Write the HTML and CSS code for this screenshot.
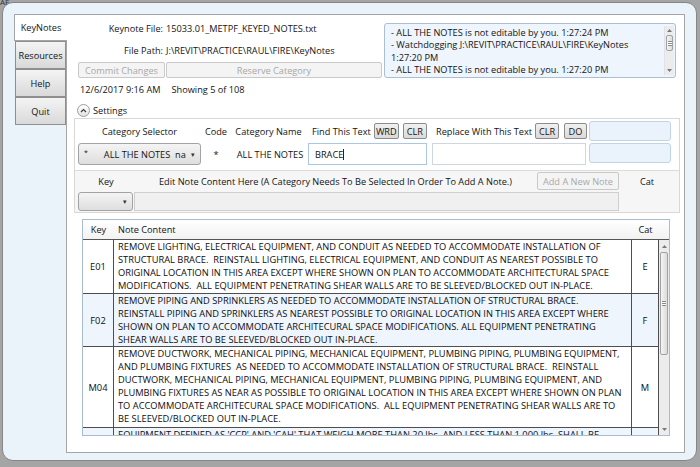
FILE: index.html
```html
<!DOCTYPE html>
<html>
<head>
<meta charset="utf-8">
<title>KeyNotes</title>
<link rel="stylesheet" href="styles.css">
</head>
<body>
<div class="desk-label">AF</div>
<div class="window">
  <div class="tabs">
    <div class="tab active">KeyNotes</div>
    <div class="tab">Resources</div>
    <div class="tab">Help</div>
    <div class="tab">Quit</div>
  </div>
  <div class="panel">
    <div class="head">
      <div class="head-left">
        <div class="info">
          <span class="lbl">Keynote File:</span><span class="val">15033.01_METPF_KEYED_NOTES.txt</span>
          <span class="lbl">File Path:</span><span class="val">J:\REVIT\PRACTICE\RAUL\FIRE\KeyNotes</span>
        </div>
        <div class="btnrow">
          <div class="btn disabled commit">Commit Changes</div>
          <div class="btn disabled reserve">Reserve Category</div>
        </div>
        <div class="status"><span>12/6/2017 9:16 AM</span><span class="showing">Showing 5 of 108</span></div>
      </div>
      <div class="log">
        <div class="log-text">
          <div>- ALL THE NOTES is not editable by you. 1:27:24 PM</div>
          <div>- Watchdogging J:\REVIT\PRACTICE\RAUL\FIRE\KeyNotes</div>
          <div>1:27:20 PM</div>
          <div>- ALL THE NOTES is not editable by you. 1:27:20 PM</div>
        </div>
        <div class="vscroll log-scroll">
          <div class="arrow"><svg width="5" height="3" viewBox="0 0 5 3"><path d="M0 3 L2.5 0 L5 3 Z" fill="#7a7a7a"/></svg></div>
          <div class="track"><div class="thumb log-thumb"><span class="grip"></span></div></div>
          <div class="arrow"><svg width="5" height="3" viewBox="0 0 5 3"><path d="M0 0 L2.5 3 L5 0 Z" fill="#7a7a7a"/></svg></div>
        </div>
      </div>
    </div>

    <div class="exp-row">
      <div class="exp-btn"><svg width="7" height="5" viewBox="0 0 7 5"><path d="M1 4 L3.5 1.5 L6 4" fill="none" stroke="#3c3c3c" stroke-width="1.2"/></svg></div>
      <span class="exp-label">Settings</span>
    </div>

    <div class="group">
      <div class="group-top">
        <div class="cell center">Category Selector</div>
        <div class="cell center">Code</div>
        <div class="cell center">Category Name</div>
        <div class="cell find"><span>Find This Text</span><span class="sbtn wrd">WRD</span><span class="sbtn clr">CLR</span></div>
        <div class="cell repl"><span>Replace With This Text</span><span class="sbtn clr2">CLR</span><span class="sbtn do">DO</span></div>
        <div class="cell"><div class="bluebox top"></div></div>

        <div class="cell"><div class="combo cat-combo"><span class="star">*</span><span class="combo-text">ALL THE NOTES&nbsp; na</span><span class="caret">&#9662;</span></div></div>
        <div class="cell center">*</div>
        <div class="cell center name">ALL THE NOTES</div>
        <div class="cell"><div class="textbox find-box">BRACE<span class="cursor"></span></div></div>
        <div class="cell"><div class="textbox repl-box"></div></div>
        <div class="cell"><div class="bluebox bottom"></div></div>
      </div>
      <div class="group-bottom">
        <div class="cell center">Key</div>
        <div class="cell center">Edit Note Content Here (A Category Needs To Be Selected In Order To Add A Note.)</div>
        <div class="cell"><div class="btn disabled add">Add A New Note</div></div>
        <div class="cell center">Cat</div>

        <div class="cell"><div class="combo key-combo"><span class="caret">&#9662;</span></div></div>
        <div class="cell span2"><div class="notebox"></div></div>
        <div class="cell"></div>
      </div>
    </div>

    <div class="grid">
      <div class="grid-head">
        <div class="hc key">Key</div>
        <div class="hc note">Note Content</div>
        <div class="hc cat">Cat</div>
        <div class="hc sc"></div>
      </div>
      <div class="grid-body">
        <div class="rows">
          <div class="row">
            <div class="c key">E01</div>
            <div class="c note">REMOVE LIGHTING, ELECTRICAL EQUIPMENT, AND CONDUIT AS NEEDED TO ACCOMMODATE INSTALLATION OF
STRUCTURAL BRACE.  REINSTALL LIGHTING, ELECTRICAL EQUIPMENT, AND CONDUIT AS NEAREST POSSIBLE TO
ORIGINAL LOCATION IN THIS AREA EXCEPT WHERE SHOWN ON PLAN TO ACCOMMODATE ARCHITECTURAL SPACE
MODIFICATIONS.  ALL EQUIPMENT PENETRATING SHEAR WALLS ARE TO BE SLEEVED/BLOCKED OUT IN-PLACE.</div>
            <div class="c cat">E</div>
          </div>
          <div class="row alt short">
            <div class="c key">F02</div>
            <div class="c note">REMOVE PIPING AND SPRINKLERS AS NEEDED TO ACCOMMODATE INSTALLATION OF STRUCTURAL BRACE.
REINSTALL PIPING AND SPRINKLERS AS NEAREST POSSIBLE TO ORIGINAL LOCATION IN THIS AREA EXCEPT WHERE
SHOWN ON PLAN TO ACCOMMODATE ARCHITECURAL SPACE MODIFICATIONS. ALL EQUIPMENT PENETRATING
SHEAR WALLS ARE TO BE SLEEVED/BLOCKED OUT IN-PLACE.</div>
            <div class="c cat">F</div>
          </div>
          <div class="row tall">
            <div class="c key">M04</div>
            <div class="c note">REMOVE DUCTWORK, MECHANICAL PIPING, MECHANICAL EQUIPMENT, PLUMBING PIPING, PLUMBING EQUIPMENT,
AND PLUMBING FIXTURES  AS NEEDED TO ACCOMMODATE INSTALLATION OF STRUCTURAL BRACE.  REINSTALL
DUCTWORK, MECHANICAL PIPING, MECHANICAL EQUIPMENT, PLUMBING PIPING, PLUMBING EQUIPMENT, AND
PLUMBING FIXTURES AS NEAR AS POSSIBLE TO ORIGINAL LOCATION IN THIS AREA EXCEPT WHERE SHOWN ON PLAN
TO ACCOMMODATE ARCHITECURAL SPACE MODIFICATIONS.  ALL EQUIPMENT PENETRATING SHEAR WALLS ARE TO
BE SLEEVED/BLOCKED OUT IN-PLACE.</div>
            <div class="c cat">M</div>
          </div>
          <div class="row alt">
            <div class="c key">M05</div>
            <div class="c note">EQUIPMENT DEFINED AS 'CCP' AND 'CAH' THAT WEIGH MORE THAN 20 lbs. AND LESS THAN 1,000 lbs. SHALL BE
SECURED TO THE STRUCTURE.</div>
            <div class="c cat">M</div>
          </div>
        </div>
        <div class="vscroll grid-scroll">
          <div class="arrow"><svg width="5" height="3" viewBox="0 0 5 3"><path d="M0 3 L2.5 0 L5 3 Z" fill="#7a7a7a"/></svg></div>
          <div class="track"><div class="thumb grid-thumb"><span class="grip"></span></div></div>
          <div class="arrow"><svg width="5" height="3" viewBox="0 0 5 3"><path d="M0 0 L2.5 3 L5 0 Z" fill="#7a7a7a"/></svg></div>
        </div>
      </div>
    </div>
  </div>
</div>
</body>
</html>
```
FILE: styles.css
```css
* { box-sizing: border-box; }
html, body { margin: 0; padding: 0; }
body {
  width: 700px;
  height: 467px;
  overflow: hidden;
  background: #a5a5a5;
  font-family: "Open Sans", "Noto Sans", sans-serif;
  font-size: 9.2px;
  color: #141414;
  position: relative;
}
.desk-label {
  position: absolute;
  left: 0;
  top: -4px;
  font-size: 8px;
  color: #333;
  z-index: 3;
}
.window {
  margin: 2px 0 0 2px;
  width: 695px;
  height: 459px;
  border: 1px solid #868686;
  border-radius: 11px;
  background: #eaf2fa;
  padding: 11px 11px 0 11px;
  display: flex;
  align-items: flex-start;
}

/* tabs */
.tabs {
  width: 53px;
  margin-right: -1px;
  display: flex;
  flex-direction: column;
  position: relative;
  z-index: 1;
}
.tab {
  height: 28px;
  width: 51px;
  margin-left: 1px;
  border: 1px solid #8f8f8f;
  background: linear-gradient(#f4f4f4, #d9d9d9);
  display: flex;
  align-items: center;
  justify-content: center;
  color: #141414;
}
.tab.active {
  height: 27px;
  width: 53px;
  margin-left: 0;
  background: #fff;
  border: 1px solid #a5a5a5;
  border-right: none;
}

/* main panel */
.panel {
  width: 619px;
  height: 439px;
  border: 1px solid #a5a5a5;
  background: #fff;
  padding: 0 4px 0 7px;
}
.head { display: flex; height: 85px; }
.head-left { width: 304px; margin-left: 4px; padding-top: 2px; }
.info {
  display: grid;
  grid-template-columns: 85px auto;
  column-gap: 3px;
  grid-auto-rows: 22px;
  align-items: center;
}
.lbl { text-align: right; }
.btnrow { display: flex; margin-top: 1px; height: 16px; }
.btn {
  display: flex;
  align-items: center;
  justify-content: center;
  border-radius: 2px;
}
.btn.disabled {
  background: #f4f4f4;
  border: 1px solid #c9c9c9;
  color: #a8a8a8;
}
.commit { width: 87px; }
.reserve { width: 216px; margin-left: 1px; }
.status { height: 22px; display: flex; align-items: center; padding-left: 2px; }
.showing { margin-left: 11px; }

.log {
  width: 292px;
  height: 55px;
  margin: 8px 0 0 2px;
  border: 1px solid #a9bfd5;
  border-radius: 3px;
  background: #eef5fc;
  display: flex;
  padding: 2px 1px 2px 0;
}
.log-text { flex: 1; padding: 1px 0 0 6px; line-height: 12.3px; }

/* scrollbars */
.vscroll { display: flex; flex-direction: column; width: 10px; background: #ececec; }
.vscroll .arrow { height: 9px; display: flex; align-items: center; justify-content: center; }
.vscroll .track { flex: 1; position: relative; }
.thumb {
  margin: 0 1px;
  border: 1px solid #a2a2a2;
  border-radius: 2px;
  background: linear-gradient(90deg, #f4f4f4, #dcdcdc);
  display: flex;
  align-items: center;
  justify-content: center;
}
.grip {
  width: 4px;
  height: 5px;
  border-top: 1px solid #8a8a8a;
  border-bottom: 1px solid #8a8a8a;
  background: linear-gradient(#fff 0 1px, #8a8a8a 1px 2px, #fff 2px);
}
.log-thumb { height: 16px; }
.log-scroll { border-left: 1px solid #dfe3e8; }

/* expander */
.exp-row { height: 18px; display: flex; align-items: center; padding-top: 2px; padding-left: 3px; }
.exp-btn {
  width: 13px;
  height: 13px;
  border-radius: 50%;
  border: 1px solid #9d9d9d;
  background: linear-gradient(#ffffff, #e3e3e3);
  display: flex;
  align-items: center;
  justify-content: center;
}
.exp-label { margin-left: 3px; }

/* settings group */
.group { border: 1px solid #d8d8d8; }
.group-top {
  display: grid;
  grid-template-columns: 123px 30px 75px 123px 159px 83px;
  grid-template-rows: 20px 22px;
  row-gap: 2px;
  padding: 2px 0 5px 3px;
  align-items: center;
}
.cell { display: flex; align-items: center; height: 100%; white-space: nowrap; }
.cell.center { justify-content: center; }
.find { padding-left: 6px; }
.repl { padding-left: 7px; }
.sbtn {
  height: 16px;
  display: inline-flex;
  align-items: center;
  justify-content: center;
  border: 1px solid #8c8c8c;
  border-radius: 2px;
  background: linear-gradient(#f1f1f1, #d9d9d9);
  color: #141414;
}
.wrd { width: 25px; margin-left: 3px; }
.clr { width: 24px; margin-left: 4px; }
.clr2 { width: 24px; margin-left: 3px; }
.do { width: 23px; margin-left: 5px; }
.bluebox {
  width: 82px;
  margin-left: 1px;
  height: 20px;
  border: 1px solid #c2d3e4;
  border-radius: 3px;
  background: #eaf3fc;
}
.bluebox.bottom { align-self: flex-start; }
.combo {
  height: 22px;
  border: 1px solid #a3a3a3;
  border-radius: 3px;
  background: linear-gradient(#f4f4f4, #dedede);
  display: flex;
  align-items: center;
  position: relative;
}
.cat-combo { width: 123px; }
.star { font-size: 7px; margin-left: 5px; margin-top: -3px; }
.combo-text { margin-left: 16px; }
.caret { font-size: 7px; position: absolute; right: 5px; top: 6px; color: #333; }
.name { justify-content: flex-start; padding-left: 3px; }
.textbox {
  height: 22px;
  background: #fff;
  display: flex;
  align-items: center;
  padding-left: 6px;
}
.find-box { width: 119px; margin-left: 2px; border: 1px solid #a8c8e6; }
.repl-box { width: 154px; margin-left: 3px; border: 1px solid #cfd6dd; }
.cursor { width: 1px; height: 11px; background: #222; margin-left: 0; }

.group-bottom {
  display: grid;
  grid-template-columns: 56px 403px 82px 56px;
  grid-template-rows: 18px 19px;
  row-gap: 2px;
  padding: 1px 0 1px 3px;
  border-top: 1px solid #dcdcdc;
  background: #f6f6f6;
  align-items: center;
}
.add { width: 82px; height: 18px; }
.key-combo { width: 55px; height: 19px; }
.key-combo .caret { top: 4px; }
.span2 { grid-column: span 2; }
.notebox {
  width: 485px;
  height: 19px;
  background: #f0f0f0;
  border: 1px solid #cfcfcf;
}

/* data grid */
.grid {
  width: 588px;
  height: 217px;
  margin: 6px 0 0 8px;
  border: 1px solid #a8bccf;
  display: flex;
  flex-direction: column;
  overflow: hidden;
}
.grid-head {
  display: flex;
  height: 20px;
  flex: none;
  background: linear-gradient(#ffffff, #f2f2f2);
  border-bottom: 1px solid #555;
}
.hc { display: flex; align-items: center; }
.key { width: 31px; justify-content: center; }
.note { width: 518px; padding-left: 4px; }
.cat { width: 27px; justify-content: center; }
.sc { width: 10px; }
.grid-body { flex: 1; display: flex; min-height: 0; }
.rows { width: 576px; overflow: hidden; }
.row { display: flex; border-bottom: 1px solid #4e4e4e; font-size: 9.3px; color: #0e0e0e; }
.row.alt { background: #eef5fd; }
.c { display: flex; align-items: center; }
.c.key, .c.note, .c.cat { border-right: 1px solid #4e4e4e; }
.c.note {
  white-space: pre;
  line-height: 13px;
  padding-bottom: 1px;
  display: block;
  overflow: hidden;
}
.row.short .c.note { padding-bottom: 0; }
.row.tall .c.note { padding-bottom: 2px; }
.grid-scroll { width: 10px; }
.grid-scroll .arrow { height: 12px; }
.grid-thumb { height: 103px; }
```
